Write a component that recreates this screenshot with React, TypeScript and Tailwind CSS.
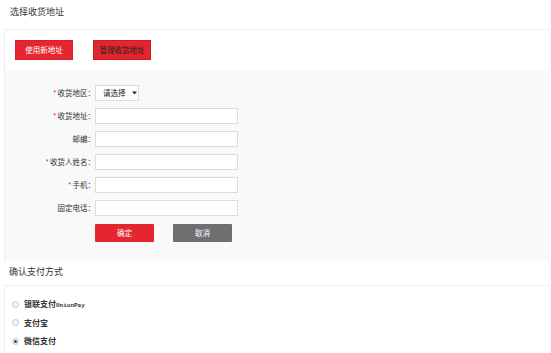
import React from 'react';

const cjk = { fontFamily: '"Noto Sans CJK SC", "Liberation Sans", sans-serif' };

const fields = [
  { label: '收货地区：', required: true, kind: 'select' },
  { label: '收货地址：', required: true, kind: 'input' },
  { label: '邮编：', required: false, kind: 'input' },
  { label: '收货人姓名：', required: true, kind: 'input' },
  { label: '手机：', required: true, kind: 'input' },
  { label: '固定电话：', required: false, kind: 'input' },
];

const payments = [
  { name: '银联支付', extra: 'UnionPay', checked: false },
  { name: '支付宝', extra: '', checked: false },
  { name: '微信支付', extra: '', checked: true },
];

const App = () => {
  return (
    <div className="w-[551px] h-[353px] bg-white text-[#333] overflow-hidden" style={cjk}>
      <div className="h-[29px] pl-[10px] pt-[5px] text-[9px] leading-[13px]">选择收货地址</div>

      <div className="ml-[4px] w-[545px] border-t border-l border-[#efefef]">
        <div className="flex gap-[20px] pl-[10px] py-[10px]">
          <button className="w-[58px] h-[20px] bg-[#e5262f] border border-[#d81e27] text-white text-[7.5px] leading-none">
            使用新地址
          </button>
          <button className="w-[58px] h-[20px] bg-[#e3252d] border border-[#cc1d25] text-[#222] text-[7.5px] leading-none">
            管理收货地址
          </button>
        </div>

        <div className="bg-[#f9f9f9] pt-[15px] pb-[19px]">
          {fields.map((f) => (
            <div key={f.label} className="flex items-center h-[16px] mb-[7px]">
              <div className="w-[90px] text-right text-[7.5px] leading-none text-[#333]">
                {f.required && <span className="text-[#e5262f] mr-[1px]">*</span>}
                {f.label}
              </div>
              {f.kind === 'select' ? (
                <div className="w-[44px] h-[16px] bg-white border border-[#dcdcdc] flex items-center pl-[7px] text-[7.5px] leading-none text-[#222] whitespace-nowrap">
                  <span>请选择</span>
                  <svg className="ml-[6px] shrink-0" width="5" height="4" viewBox="0 0 5 4">
                    <path d="M0 0.5 H5 L2.5 3.5 Z" fill="#222" />
                  </svg>
                </div>
              ) : (
                <div className="w-[143px] h-[16px] bg-white border border-[#dcdcdc]" />
              )}
            </div>
          ))}
          <div className="flex gap-[19px] pl-[90px] mt-[8px]">
            <button className="w-[59px] h-[18px] bg-[#e5262f] text-white text-[7.5px] leading-none rounded-[1px]">
              确定
            </button>
            <button className="w-[59px] h-[18px] bg-[#6f6f71] text-white text-[7.5px] leading-none rounded-[1px]">
              取消
            </button>
          </div>
        </div>
      </div>

      <div className="h-[24px] pl-[9px] pt-[4px] text-[9px] leading-[13px]">确认支付方式</div>

      <div className="ml-[4px] w-[545px] h-[80px] border-t border-l border-[#efefef] pt-[12px]">
        {payments.map((p) => (
          <div key={p.name} className="flex items-center h-[12px] mb-[6.5px] pl-[7px]">
            <span className="w-[7px] h-[7px] rounded-full border border-[#c8c8c8] bg-[#f4f4f4] flex items-center justify-center">
              {p.checked && <span className="w-[3px] h-[3px] rounded-full bg-[#444]" />}
            </span>
            <span className="ml-[5px] flex items-baseline text-[8px] font-bold leading-none text-[#333]">
              {p.name}
              {p.extra && (
                <span
                  className="text-[6px] font-bold leading-none text-[#333]"
                  style={{ fontFamily: '"Liberation Mono", monospace' }}
                >
                  {p.extra}
                </span>
              )}
            </span>
          </div>
        ))}
      </div>
    </div>
  );
};

export default App;
